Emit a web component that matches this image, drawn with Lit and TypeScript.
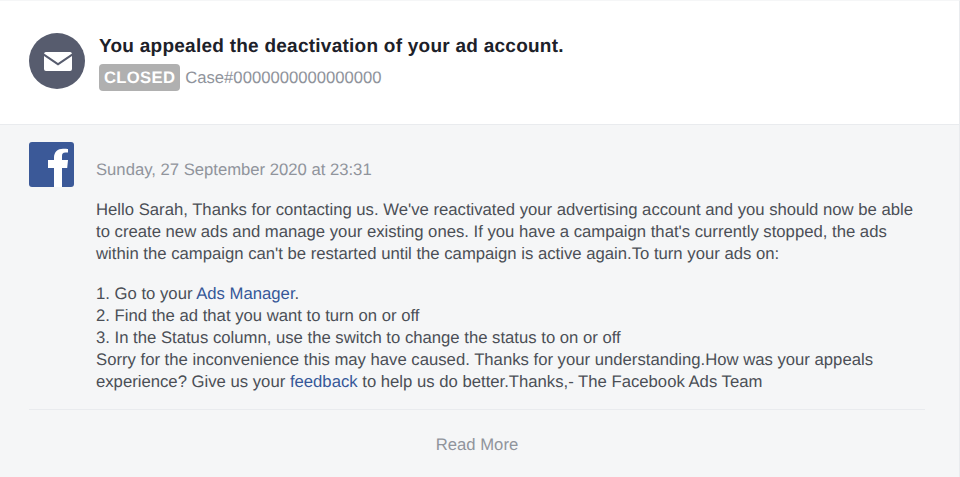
import { LitElement, html, css } from "lit";
import { customElement } from "lit/decorators.js";

@customElement("app-root")
export class AppRoot extends LitElement {
  static styles = css`
    :host { display: block; width: 960px; height: 477px; overflow: hidden; font-family: "Liberation Sans", Arial, sans-serif; color: #4b4f56; text-rendering: geometricPrecision; }
    .card { box-sizing: border-box; width: 960px; height: 477px; border-right: 1px solid #e9ebee; border-top: 1px solid #f5f6f7; display: flex; flex-direction: column; background: #f5f6f7; }
    .head { box-sizing: border-box; height: 124px; flex: none; background: #fff; border-bottom: 1px solid #e9ebee; display: flex; align-items: flex-start; gap: 14px; padding: 32px 29px 0; }
    .avatar { width: 56px; height: 56px; border-radius: 50%; background: #575c6e; display: flex; align-items: center; justify-content: center; flex: none; }
    .titles { display: flex; flex-direction: column; gap: 5px; margin-top: 2px; }
    .title { font-size: 19px; font-weight: 700; color: #1d2129; line-height: 24px; letter-spacing: 0.25px; }
    .status { display: flex; align-items: center; gap: 5px; }
    .badge { background: #b0b0b0; color: #fff; font-weight: 700; font-size: 16.67px; line-height: 27px; height: 27px; padding: 0 5px; border-radius: 4px; letter-spacing: 0.3px; }
    .case { font-size: 16.67px; color: #90949c; }
    .body { flex: 1; display: flex; flex-direction: column; padding: 17px 34px 0 29px; }
    .meta { display: flex; gap: 22px; }
    .logo { flex: none; width: 45px; height: 45px; }
    .date { font-size: 16.67px; color: #90949c; padding-top: 17px; line-height: 22px; }
    .msg { font-size: 16.71px; line-height: 22px; margin: 12px 0 0 67px; }
    .msg p { margin: 0 0 18px; }
    .msg p:last-child { margin-bottom: 0; }
    a { color: #365899; text-decoration: none; }
    .rule { border-top: 1px solid #e9ebee; margin-top: 16px; }
    .more { text-align: center; font-size: 16.67px; line-height: 22px; color: #90949c; padding-top: 24px; }
  `;

  render() {
    return html`<div class="card">
      <div class="head">
        <div class="avatar">
          <svg width="28" height="19" viewBox="0 0 28 19" style="margin-left:1px"><path fill="#fff" d="M2 0H26A2 2 0 0 1 28 1.500L14 11 0 1.500A2 2 0 0 1 2 0Z"/><path fill="#fff" d="M0 4 14 13.500 28 4V17A2 2 0 0 1 26 19H2A2 2 0 0 1 0 17Z"/></svg>
        </div>
        <div class="titles">
          <div class="title">You appealed the deactivation of your ad account.</div>
          <div class="status"><span class="badge">CLOSED</span><span class="case">Case#0000000000000000</span></div>
        </div>
      </div>
      <div class="body">
        <div class="meta">
          <svg class="logo" viewBox="0 0 45 45"><rect width="45" height="45" rx="3" fill="#3b5998"/><path fill="#fff" d="M33 45V26h5.200l.8-8h-6v-4c0-2.200.7-3.500 3.500-3.500H39V7c-.7-.1-2.700-.3-5-.3-5.200 0-9 3.200-9 9V18H19v8h6V45Z"/></svg>
          <div class="date">Sunday, 27 September 2020 at 23:31</div>
        </div>
        <div class="msg">
          <p>Hello Sarah, Thanks for contacting us. We've reactivated your advertising account and you should now be able to create new ads and manage your existing ones. If you have a campaign that's currently stopped, the ads within the campaign can't be restarted until the campaign is active again.To turn your ads on:</p>
          <p>1. Go to your <a>Ads Manager</a>.<br>2. Find the ad that you want to turn on or off<br>3. In the Status column, use the switch to change the status to on or off<br>Sorry for the inconvenience this may have caused. Thanks for your understanding.How was your appeals experience? Give us your <a>feedback</a> to help us do better.Thanks,- The Facebook Ads Team</p>
        </div>
        <div class="rule"></div>
        <div class="more">Read More</div>
      </div>
    </div>`;
  }
}
